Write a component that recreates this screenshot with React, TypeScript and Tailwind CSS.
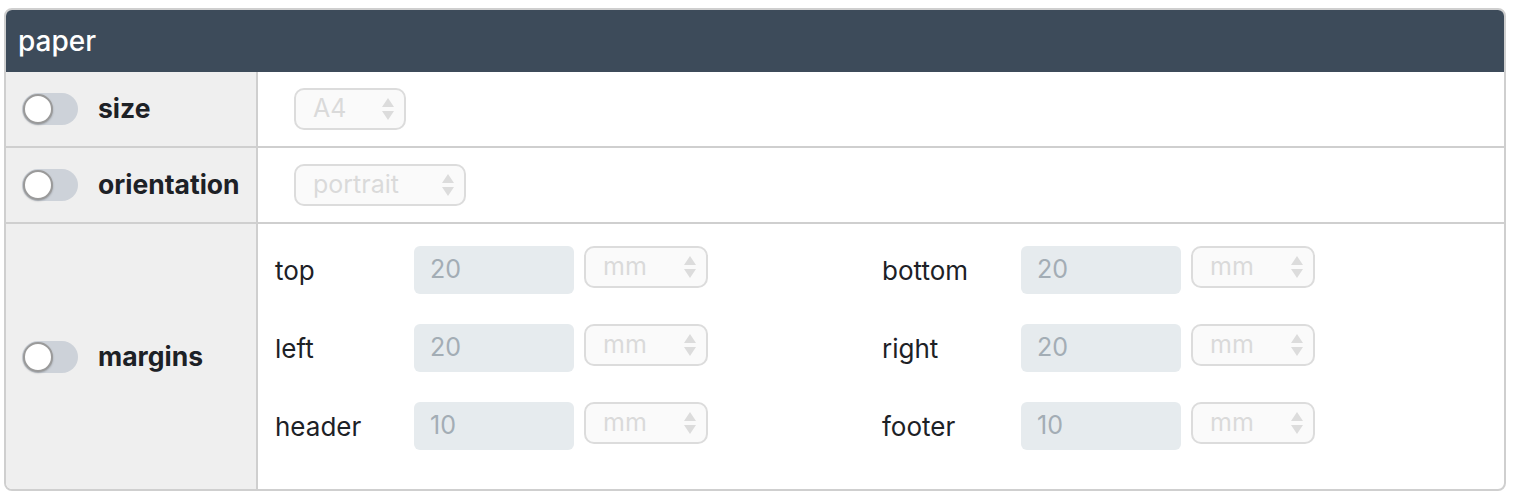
import React from "react";

const FONT = { fontFamily: "Inter, 'Noto Sans', 'Liberation Sans', sans-serif" };

function Toggle() {
  return (
    <div className="relative w-[56px] h-[32px] rounded-full bg-[#cdd2d9] flex-shrink-0">
      <div className="absolute left-[1px] top-[1px] w-[30px] h-[30px] rounded-full bg-white border-2 border-[#9a9a9a] shadow-[0_1px_2px_rgba(0,0,0,0.25)]" />
    </div>
  );
}

function Arrows() {
  return (
    <svg width="14" height="26" viewBox="0 0 14 26" className="flex-shrink-0">
      <path d="M7 2 L13 11 L1 11 Z" fill="#dcdcdc" />
      <path d="M7 24 L13 15 L1 15 Z" fill="#dcdcdc" />
    </svg>
  );
}

function Select({ value, width }: { value: string; width: string }) {
  return (
    <div
      className={`${width} h-[42px] border-2 border-[#dcdcdc] rounded-[10px] bg-[#fafafa] flex items-center justify-between pl-[17px] pr-[9px] text-[25px] text-[#dadada] flex-shrink-0`}
    >
      <span>{value}</span>
      <Arrows />
    </div>
  );
}

type Margin = { label: string; value: string };

const margins: Margin[] = [
  { label: "top", value: "20" },
  { label: "bottom", value: "20" },
  { label: "left", value: "20" },
  { label: "right", value: "20" },
  { label: "header", value: "10" },
  { label: "footer", value: "10" },
];

function MarginField({ m }: { m: Margin }) {
  return (
    <div className="flex items-start">
      <div className="w-[139px] h-[48px] flex items-center text-[26px] text-[#1d2126]">{m.label}</div>
      <div className="w-[160px] h-[48px] rounded-[6px] bg-[#e6ebee] flex items-center pl-[16px] text-[25px] text-[#a3adb5]">
        {m.value}
      </div>
      <div className="ml-[10px]">
        <Select value="mm" width="w-[124px]" />
      </div>
    </div>
  );
}

function LeftCell({ label }: { label: string }) {
  return (
    <div className="w-[252px] bg-[#efefef] border-r-2 border-[#cfcfcf] flex items-center gap-[20px] pl-[16px] flex-shrink-0">
      <Toggle />
      <span className="text-[26.5px] font-bold text-[#1d2126]">{label}</span>
    </div>
  );
}

export default function App() {
  return (
    <div className="w-[1514px] h-[498px] bg-white pt-[8px] pl-[4px]" style={FONT}>
      <div className="w-[1502px] border-2 border-[#cfcfcf] rounded-[8px] overflow-hidden">
        {/* Header */}
        <div className="h-[62px] bg-[#3d4b5a] flex items-center pl-[12px] text-[28px] font-medium text-white">
          paper
        </div>

        {/* size */}
        <div className="flex h-[74px]">
          <LeftCell label="size" />
          <div className="flex-1 flex items-center pl-[36px]">
            <Select value="A4" width="w-[112px]" />
          </div>
        </div>

        {/* orientation */}
        <div className="flex h-[76px] border-t-2 border-[#cfcfcf]">
          <LeftCell label="orientation" />
          <div className="flex-1 flex items-center pl-[36px]">
            <Select value="portrait" width="w-[172px]" />
          </div>
        </div>

        {/* margins */}
        <div className="flex h-[267px] border-t-2 border-[#cfcfcf]">
          <LeftCell label="margins" />
          <div className="flex-1 pl-[17px] pt-[22px]">
            <div className="grid grid-cols-[607px_1fr] gap-y-[30px]">
              {margins.map((m) => (
                <MarginField key={m.label} m={m} />
              ))}
            </div>
          </div>
        </div>
      </div>
    </div>
  );
}
